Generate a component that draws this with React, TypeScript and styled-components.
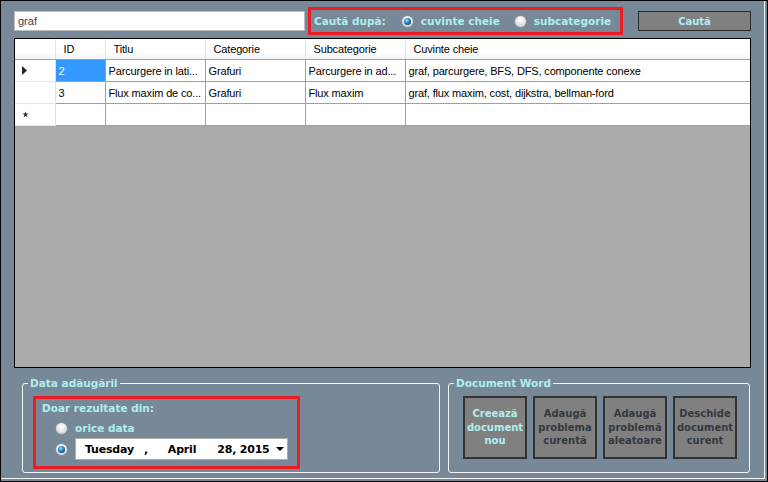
import React from 'react';
import styled, { createGlobalStyle } from 'styled-components';

const GlobalStyle = createGlobalStyle`
  html, body {
    margin: 0;
    padding: 0;
    background: #778899;
  }
  body {
    font-family: 'Liberation Sans', Arial, sans-serif;
  }
`;

const CYAN = '#afeeee';

const Window = styled.div`
  width: 768px;
  height: 482px;
  box-sizing: border-box;
  background: #778899;
  border: 1px solid #000;
  box-shadow: inset -2px -2px 0 #778899, inset -3px -3px 0 #f2f2f2;
  padding: 6px 16px 0 13px;
  display: flex;
  flex-direction: column;
  overflow: hidden;
`;

const TopBar = styled.div`
  display: flex;
  align-items: center;
  height: 28px;
`;

const SearchInput = styled.input`
  width: 291px;
  height: 20px;
  box-sizing: border-box;
  border: 1px solid #b9bdc2;
  background: #fff;
  font-family: 'Liberation Sans', Arial, sans-serif;
  font-size: 11px;
  color: #3c3c4c;
  padding: 0 3px;
  margin: 0;
  outline: none;
`;

const Highlight = styled.div`
  border: 3px solid #ed1c24;
  box-sizing: border-box;
  display: flex;
  align-items: center;
`;

const SearchBy = styled(Highlight)`
  margin-left: 3px;
  width: 315px;
  height: 28px;
  padding-left: 3px;
`;

const Label = styled.span`
  font-family: 'DejaVu Sans', Verdana, sans-serif;
  font-weight: bold;
  font-size: 10.5px;
  color: ${CYAN};
  white-space: nowrap;
  line-height: 14px;
`;

const RadioOption = styled.div<{ $gap?: number }>`
  display: flex;
  align-items: center;
  gap: ${p => p.$gap ?? 7}px;
`;

const Radio = styled.span<{ $checked?: boolean }>`
  width: 13px;
  height: 13px;
  border-radius: 50%;
  box-sizing: border-box;
  border: 1px solid #8d9091;
  background: radial-gradient(circle at 50% 35%, #ffffff 0, #e8e8e8 45%, #c4c4c4 100%);
  display: inline-flex;
  align-items: center;
  justify-content: center;
  flex: none;

  &::after {
    content: '';
    width: 7px;
    height: 7px;
    border-radius: 50%;
    background: radial-gradient(circle at 40% 35%, #9be6ff 0, #2a86c8 40%, #0c2c4a 100%);
    display: ${p => (p.$checked ? 'block' : 'none')};
  }
`;

const SearchButton = styled.button`
  margin-left: 15px;
  width: 113px;
  height: 20px;
  box-sizing: border-box;
  border: 1px solid #2b2b2b;
  background: #808080;
  font-family: 'DejaVu Sans', Verdana, sans-serif;
  font-weight: bold;
  font-size: 10px;
  color: ${CYAN};
  padding: 0;
`;

const GridFrame = styled.div`
  margin-top: 3px;
  width: 737px;
  height: 330px;
  box-sizing: border-box;
  border: 1px solid #000;
  background: #ababab;
  overflow: hidden;
`;

const Table = styled.table`
  border-collapse: collapse;
  table-layout: fixed;
  width: 735px;
  font-family: 'Liberation Sans', Arial, sans-serif;
  font-size: 11px;
  letter-spacing: -0.15px;
  color: #000;
`;

const HeadCell = styled.th`
  height: 20px;
  padding: 0 0 0 8px;
  text-align: left;
  font-weight: normal;
  background: linear-gradient(#ffffff, #ffffff 60%, #f2f3f5);
  border-right: 1px solid #e3e4e6;
  border-bottom: 1px solid #a0a0a0;
  white-space: nowrap;
  overflow: hidden;
`;

const RowHead = styled.td`
  height: 21px;
  padding: 0;
  background: #fff;
  border: 1px solid #a0a0a0;
  border-left: none;
  border-color: #a0a0a0 #e0e0e0 #e6e6e6 #a0a0a0;
`;

const Cell = styled.td<{ $selected?: boolean }>`
  height: 21px;
  padding: 0 0 0 3px;
  border: 1px solid #a0a0a0;
  background: ${p => (p.$selected ? '#3399ff' : '#fff')};
  color: ${p => (p.$selected ? '#fff' : '#000')};
  white-space: nowrap;
  overflow: hidden;
`;

const RowMarker = styled.div`
  display: flex;
  align-items: center;
  padding-left: 7px;
`;

const BottomRow = styled.div`
  display: flex;
  gap: 8px;
  margin-top: 8px;
  margin-left: 8px;
`;

const Group = styled.fieldset<{ $width: number }>`
  width: ${p => p.$width}px;
  height: 97px;
  box-sizing: border-box;
  margin: 0;
  padding: 0;
  border: 1px solid #f4f4f4;
  border-radius: 3px;
  min-width: 0;
`;

const Legend = styled.legend`
  margin-left: 5px;
  padding: 0 2px;
  font-family: 'DejaVu Sans', Verdana, sans-serif;
  font-weight: bold;
  font-size: 10.5px;
  color: ${CYAN};
  line-height: 14px;
`;

const DateFilter = styled(Highlight)`
  margin: 6px 0 0 10px;
  width: 267px;
  height: 73px;
  flex-direction: column;
  align-items: flex-start;
  padding: 2px 0 0 6px;
`;

const Options = styled.div`
  display: flex;
  flex-direction: column;
  margin: 6px 0 0 13px;
  gap: 3px;
`;

const DatePicker = styled.div`
  width: 213px;
  height: 22px;
  box-sizing: border-box;
  border: 1px solid #a9aeb3;
  background: #fff;
  display: flex;
  align-items: center;
  padding-left: 9px;
  font-family: 'DejaVu Sans', Verdana, sans-serif;
  font-weight: bold;
  font-size: 11px;
  letter-spacing: -0.2px;
  color: #000;
  white-space: pre;
`;

const DatePart = styled.span<{ $ml?: number }>`
  margin-left: ${p => p.$ml ?? 0}px;
`;

const DropArrow = styled.span`
  margin-left: auto;
  margin-right: 3px;
  width: 0;
  height: 0;
  border-left: 4px solid transparent;
  border-right: 4px solid transparent;
  border-top: 4px solid #000;
`;

const Buttons = styled.div`
  display: flex;
  gap: 6px;
  margin: 6px 0 0 14px;
`;

const WordButton = styled.button<{ $accent?: boolean }>`
  width: 64px;
  height: 63px;
  box-sizing: border-box;
  border: 2px solid #333;
  background: #808080;
  padding: 0;
  font-family: 'DejaVu Sans', Verdana, sans-serif;
  font-weight: bold;
  font-size: 10px;
  line-height: 13.5px;
  color: ${p => (p.$accent ? CYAN : '#333a40')};
  text-align: center;
`;

const columns = [
  { name: 'ID', width: 50 },
  { name: 'Titlu', width: 100 },
  { name: 'Categorie', width: 100 },
  { name: 'Subcategorie', width: 100 },
  { name: 'Cuvinte cheie', width: 345 },
];

const rows = [
  ['2', 'Parcurgere in lati...', 'Grafuri', 'Parcurgere in ad...', 'graf, parcurgere, BFS, DFS, componente conexe'],
  ['3', 'Flux maxim de co...', 'Grafuri', 'Flux maxim', 'graf, flux maxim, cost, dijkstra, bellman-ford'],
];

const wordActions = [
  { lines: ['Creează', 'document', 'nou'], accent: true },
  { lines: ['Adaugă', 'problema', 'curentă'] },
  { lines: ['Adaugă', 'problemă', 'aleatoare'] },
  { lines: ['Deschide', 'document', 'curent'] },
];

function CurrentRowIcon() {
  return (
    <svg width="5" height="9" viewBox="0 0 5 9">
      <path d="M0 0 L5 4.5 L0 9 Z" fill="#222" />
    </svg>
  );
}

function NewRowIcon() {
  return (
    <svg width="7" height="7" viewBox="0 0 7 7">
      <path d="M3.5 0.5 L4.3 2.4 L6.4 2.6 L4.8 4 L5.3 6.3 L3.5 5.1 L1.7 6.3 L2.2 4 L0.6 2.6 L2.7 2.4 Z" fill="#333" />
    </svg>
  );
}

export default function App() {
  return (
    <>
      <GlobalStyle />
      <Window>
        <TopBar>
          <SearchInput defaultValue="graf" />
          <SearchBy>
            <Label>Caută după:</Label>
            <RadioOption style={{ marginLeft: 15 }}>
              <Radio $checked />
              <Label>cuvinte cheie</Label>
            </RadioOption>
            <RadioOption style={{ marginLeft: 14 }}>
              <Radio />
              <Label>subcategorie</Label>
            </RadioOption>
          </SearchBy>
          <SearchButton>Caută</SearchButton>
        </TopBar>

        <GridFrame>
          <Table>
            <colgroup>
              <col style={{ width: 40 }} />
              {columns.map(c => (
                <col key={c.name} style={{ width: c.width }} />
              ))}
            </colgroup>
            <thead>
              <tr>
                <HeadCell />
                {columns.map(c => (
                  <HeadCell key={c.name}>{c.name}</HeadCell>
                ))}
              </tr>
            </thead>
            <tbody>
              {rows.map((row, i) => (
                <tr key={row[0]}>
                  <RowHead>
                    <RowMarker>{i === 0 && <CurrentRowIcon />}</RowMarker>
                  </RowHead>
                  {row.map((value, j) => (
                    <Cell key={j} $selected={i === 0 && j === 0}>
                      {value}
                    </Cell>
                  ))}
                </tr>
              ))}
              <tr>
                <RowHead>
                  <RowMarker>
                    <NewRowIcon />
                  </RowMarker>
                </RowHead>
                {columns.map(c => (
                  <Cell key={c.name} />
                ))}
              </tr>
            </tbody>
          </Table>
        </GridFrame>

        <BottomRow>
          <Group $width={418}>
            <Legend>Data adăugării</Legend>
            <DateFilter>
              <Label>Doar rezultate din:</Label>
              <Options>
                <RadioOption>
                  <Radio />
                  <Label>orice data</Label>
                </RadioOption>
                <RadioOption $gap={7}>
                  <Radio $checked />
                  <DatePicker>
                    <DatePart>Tuesday</DatePart>
                    <DatePart $ml={10}>,</DatePart>
                    <DatePart $ml={20}>April</DatePart>
                    <DatePart $ml={21}>28, 2015</DatePart>
                    <DropArrow />
                  </DatePicker>
                </RadioOption>
              </Options>
            </DateFilter>
          </Group>

          <Group $width={302}>
            <Legend>Document Word</Legend>
            <Buttons>
              {wordActions.map(a => (
                <WordButton key={a.lines.join(' ')} $accent={a.accent}>
                  {a.lines.map(l => (
                    <div key={l}>{l}</div>
                  ))}
                </WordButton>
              ))}
            </Buttons>
          </Group>
        </BottomRow>
      </Window>
    </>
  );
}
